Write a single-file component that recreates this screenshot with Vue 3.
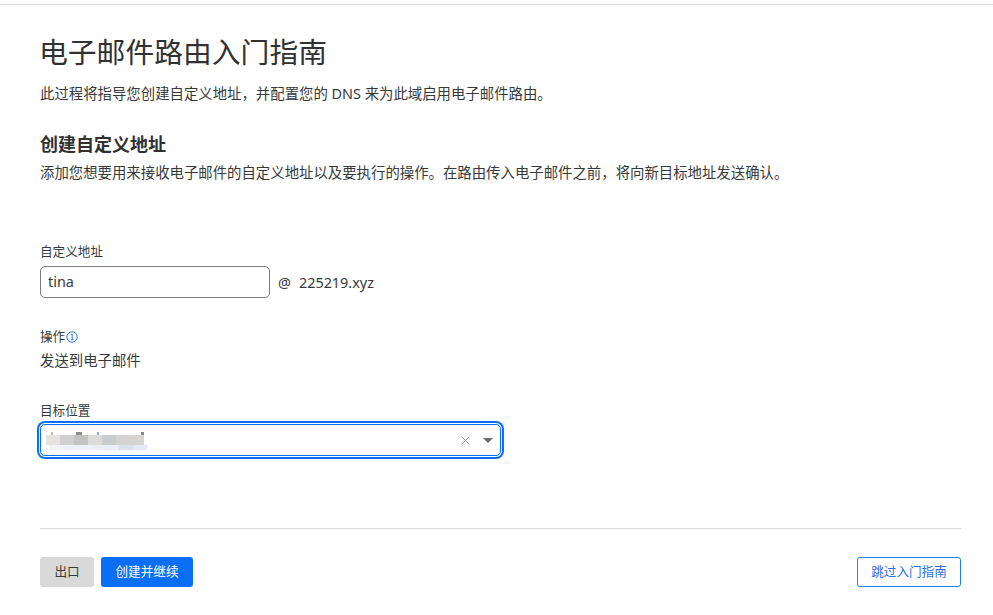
<script setup>
const mosaic = [
  { w: 14, c: '#e6e2df' }, { w: 14, c: '#cfcfd0' }, { w: 14, c: '#c4c2c0' }, { w: 14, c: '#dcdcda' },
  { w: 14, c: '#c9cccc' }, { w: 14, c: '#d4d3d2' }, { w: 14, c: '#d5d4d2' }
]
const mosaicLow = [
  { w: 14, c: '#f2f3f7' }, { w: 14, c: '#eef1f8' }, { w: 14, c: '#eef1f8' }, { w: 14, c: '#e9eef8' },
  { w: 14, c: '#e8edf8' }, { w: 14, c: '#dbe2ec' }, { w: 14, c: '#e3e9f6' }
]
const specks = [
  { x: 5, w: 2, c: '#c9b5a5' },
  { x: 30, w: 6, c: '#8d8d90' },
  { x: 51, w: 2, c: '#9fb0c0' },
  { x: 95, w: 3, c: '#85888c' }
]
</script>

<template>
  <div class="page">
    <main class="content">
      <h1 class="title">电子邮件路由入门指南</h1>
      <p class="lead">此过程将指导您创建自定义地址，并配置您的 DNS 来为此域启用电子邮件路由。</p>

      <h2 class="section">创建自定义地址</h2>
      <p class="desc">添加您想要用来接收电子邮件的自定义地址以及要执行的操作。在路由传入电子邮件之前，将向新目标地址发送确认。</p>

      <div class="field-address">
        <label class="label">自定义地址</label>
        <div class="address-row">
          <div class="input">tina</div>
          <span class="at">@</span>
          <span class="domain">225219.xyz</span>
        </div>
      </div>

      <div class="field-action">
        <div class="label action-label">操作<svg class="info" width="12" height="12" viewBox="0 0 12 12" fill="none"><circle cx="6" cy="6" r="5.2" stroke="#2f7bd9" stroke-width="1"/><path d="M4.9 3.6 6.2 3v5.6M4.9 8.7h2.6" stroke="#2f7bd9" stroke-width="1"/></svg></div>
        <div class="action-value">发送到电子邮件</div>
      </div>

      <div class="field-target">
        <label class="label">目标位置</label>
        <div class="select">
          <div class="blur" aria-hidden="true">
            <div class="speck-row">
              <i v-for="(s, i) in specks" :key="i" :style="{ left: s.x + 'px', width: s.w + 'px', background: s.c }"></i>
            </div>
            <div class="blur-row">
              <i v-for="(m, i) in mosaic" :key="i" :style="{ width: m.w + 'px', background: m.c }"></i>
            </div>
            <div class="blur-row low">
              <i v-for="(m, i) in mosaicLow" :key="i" :style="{ width: m.w + 'px', background: m.c }"></i>
            </div>
          </div>
          <svg class="clear" width="9" height="9" viewBox="0 0 9 9" fill="none"><path d="M.7.7l7.6 7.6M8.3.7.7 8.3" stroke="#9a9a9a" stroke-width="1"/></svg>
          <span class="caret"></span>
        </div>
      </div>

      <footer class="footer">
        <div class="footer-left">
          <button class="btn btn-gray">出口</button>
          <button class="btn btn-blue">创建并继续</button>
        </div>
        <button class="btn btn-outline">跳过入门指南</button>
      </footer>
    </main>
  </div>
</template>

<style>
html, body { margin: 0; background: #fff; }
</style>

<style scoped>
.page {
  width: 993px;
  height: 615px;
  box-sizing: border-box;
  padding-top: 4px;
  overflow: hidden;
  background: #fff;
  color: #36393a;
  font-family: "Noto Sans", "Noto Sans CJK SC", sans-serif;
}
.content {
  border-top: 1px solid #dedede;
  padding: 0 32px 0 40px;
}
.title {
  margin: 28px 0 0 -1px;
  font-size: 28.8px;
  font-weight: 400;
  line-height: 38px;
  color: #313131;
}
.lead {
  margin: 13px 0 0;
  font-size: 14.4px;
  line-height: 20px;
  white-space: nowrap;
}
.section {
  margin: 28px 0 0;
  font-size: 18px;
  font-weight: 700;
  line-height: 24px;
  color: #313131;
}
.desc {
  margin: 7px 0 0;
  font-size: 14.4px;
  line-height: 20px;
  white-space: nowrap;
}
.label {
  display: block;
  font-size: 12.6px;
  line-height: 18px;
}
.field-address { margin-top: 60px; }
.address-row {
  display: flex;
  align-items: center;
  margin-top: 5px;
}
.input {
  box-sizing: border-box;
  width: 230px;
  height: 32px;
  padding: 0 7px;
  border: 1px solid #7d7d7d;
  border-radius: 5px;
  font-size: 14.4px;
  line-height: 30px;
}
.at { margin-left: 8px; font-size: 14.4px; }
.domain { margin-left: 8px; font-size: 14.4px; }
.field-action { margin-top: 30px; }
.action-label { display: flex; align-items: center; gap: 1px; }
.info { display: block; }
.action-value { margin-top: 5px; font-size: 14.4px; line-height: 20px; }
.field-target { margin-top: 31px; }
.select {
  position: relative;
  box-sizing: border-box;
  display: flex;
  align-items: center;
  width: 461px;
  height: 32px;
  margin-top: 4px;
  border: 1px solid #0a6ff5;
  border-radius: 5px;
  box-shadow: 0 0 0 1px #fff, 0 0 0 3px #0a6ff5;
}
.blur { position: absolute; left: 5px; top: 7px; }
.speck-row { position: relative; height: 3px; }
.speck-row i { position: absolute; top: 0; height: 3px; display: block; }
.blur-row { display: flex; height: 10px; }
.blur-row.low { height: 5px; margin-left: 3px; }
.blur-row i { display: block; }
.clear { margin-left: auto; }
.caret {
  width: 0;
  height: 0;
  margin: 0 7px 0 13px;
  border-left: 5px solid transparent;
  border-right: 5px solid transparent;
  border-top: 5px solid #6a6a6a;
}
.footer {
  display: flex;
  justify-content: space-between;
  margin-top: 72px;
  padding-top: 28px;
  border-top: 1px solid #d9d9d9;
}
.footer-left { display: flex; gap: 7px; }
.btn {
  box-sizing: border-box;
  height: 30px;
  border: 0;
  border-radius: 3px;
  padding: 0;
  font-family: inherit;
  font-size: 12.6px;
  line-height: 30px;
}
.btn-gray { width: 54px; background: #d9d9d9; color: #36393a; }
.btn-blue { width: 92px; background: #0a6ff5; color: #fff; }
.btn-outline {
  width: 104px;
  background: #fff;
  color: #2c6fe8;
  border: 1px solid #1f7ff0;
  line-height: 28px;
}
</style>
